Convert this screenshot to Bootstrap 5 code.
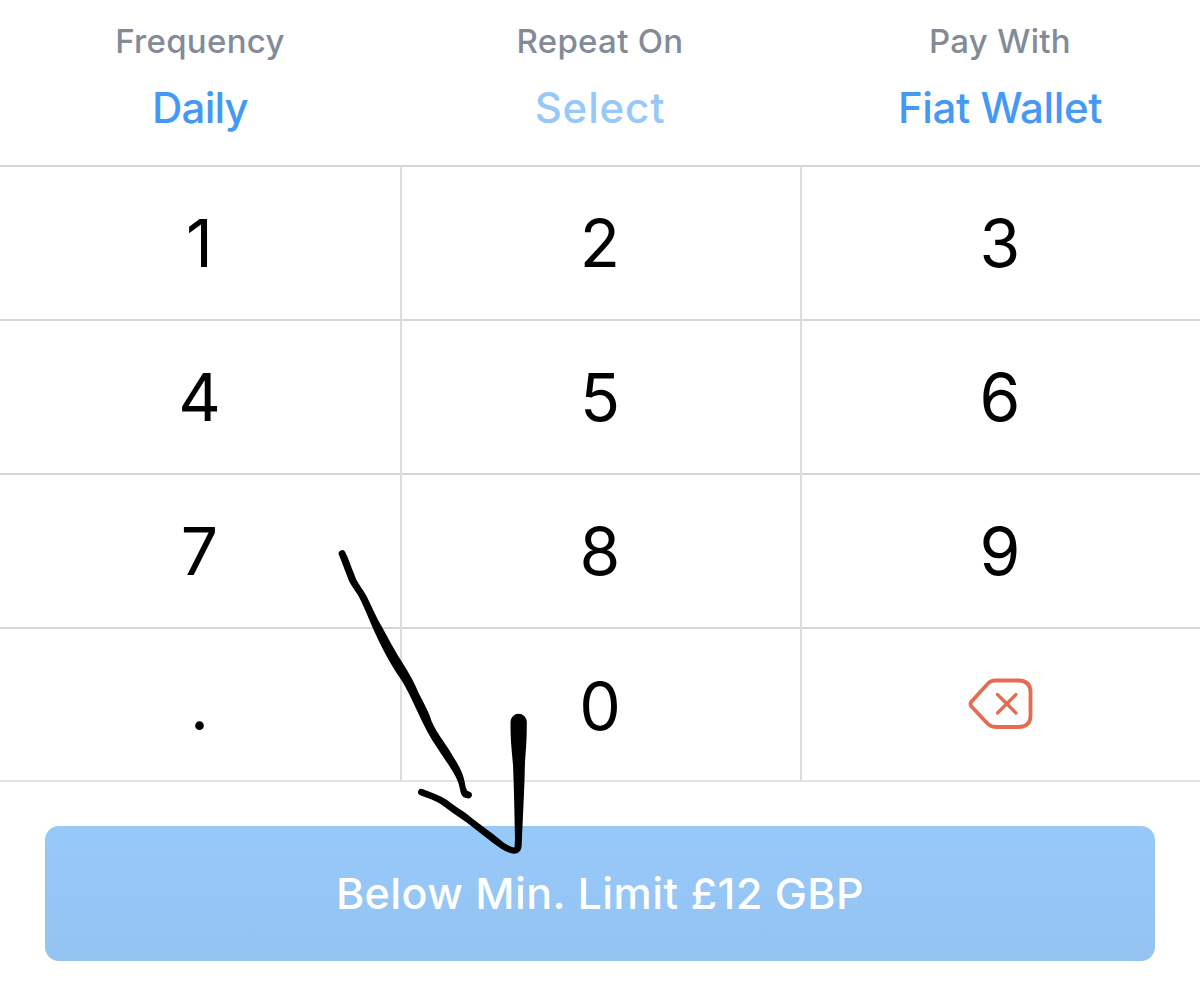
<!DOCTYPE html>
<html lang="en">
<head>
<meta charset="utf-8">
<meta name="viewport" content="width=device-width, initial-scale=1">
<title>Recurring buy</title>
<link href="https://cdn.jsdelivr.net/npm/bootstrap@5.3.0/dist/css/bootstrap.min.css" rel="stylesheet">
<style>
  body { font-family: Inter, "Liberation Sans", sans-serif; background: #fff; height: 990px; overflow: hidden; }
  .options { height: 164.500px; padding-top: 20px; }
  .opt-label { font-size: 33px; line-height: 42px; color: #838b99; letter-spacing: .3px; font-weight: 500; }
  .opt-value { font-size: 42px; line-height: 50px; margin-top: 21px; color: #4698f5; font-weight: 500; letter-spacing: -.4px; }
  .opt-value.short { letter-spacing: -.8px; }
  .opt-value.pending { color: #96c8f8; letter-spacing: .85px; }
  .keypad { border-bottom: 2px solid #e4e4e5; height: 617.500px; }
  .key { height: 154px; font-size: 66px; line-height: 1; color: #000; background: none; border: 0; border-top: 2px solid #d5d5d6; padding: 0 1px 0 0; }
  .key:last-child { height: 153.500px; padding-top: 3px; }
  .key-col + .key-col { border-left: 2px solid #dcdcdd; }
  .key-col + .key-col .key { padding-right: 2px; }
  .key-col:nth-child(-n+2) { flex: 0 0 400px; }
  .cta { margin: 44px 45px 0; height: 135px; border: 0; border-radius: 14px; color: #fff; font-size: 43px; font-weight: 500; letter-spacing: .45px; background: linear-gradient(#97c9f9, #94c3f1); padding: 0; }
  .scribble { left: 0; top: 0; pointer-events: none; }
</style>
</head>
<body>
<main class="position-relative">
  <header class="options row g-0 text-center">
    <div class="col"><div class="opt-label"><span>Frequency</span></div><div class="opt-value short"><span>Daily</span></div></div>
    <div class="col"><div class="opt-label"><span>Repeat On</span></div><div class="opt-value pending"><span>Select</span></div></div>
    <div class="col"><div class="opt-label"><span>Pay With</span></div><div class="opt-value"><span>Fiat Wallet</span></div></div>
  </header>
  <section class="keypad row g-0">
    <div class="col key-col d-flex flex-column">
      <button class="key">1</button><button class="key">4</button><button class="key">7</button><button class="key">.</button>
    </div>
    <div class="col key-col d-flex flex-column">
      <button class="key">2</button><button class="key">5</button><button class="key">8</button><button class="key">0</button>
    </div>
    <div class="col key-col d-flex flex-column">
      <button class="key">3</button><button class="key">6</button><button class="key">9</button>
      <button class="key d-flex align-items-center justify-content-center pt-0 pe-0" aria-label="Delete">
        <svg width="66" height="54" viewBox="968 677 66 54" fill="none" stroke="#e56c4f" stroke-width="3.8" stroke-linecap="round" stroke-linejoin="round">
          <path d="M995 680.5H1018Q1030.500 680.500 1030.500 692V715.500Q1030.500 727 1018 727H996Q991 727 988 724L971.500 706.500Q969.500 704 971.500 701.500L988 683.500Q991 680.500 995 680.500Z"/>
          <path stroke-width="3.200" d="M997.500 694.500L1016 713M1016 694.500L997.500 713"/>
        </svg>
      </button>
    </div>
  </section>
  <div class="d-grid"><button class="cta">Below Min. Limit £12 GBP</button></div>
  <svg class="scribble position-absolute" width="1200" height="990" viewBox="0 0 1200 990">
    <path d="M345.200 552C349 559 351 567 354.500 575C357 583 363 589 367 597C372 607 376 617 382 627C388 638 396 653 402 662C407 670 412 678 416 687C421 699 428 709 431.500 721C437 734 447 745 454 758C461 769 464 776 465.500 786.500L467 790.500L469.500 791.800A3.200 3.200 0 0 1 467.500 798.300C463 798 461 795 460.300 791C459 783 457 779 453 772C444 757 435 746 427.500 732C419 716 411 696 402 681C392 667 383 650 376.500 636C370 622 366 611 359 597C356 591 350 585 347.500 577C344.500 570 342 562 339 555A3.200 3.200 0 0 1 345.200 552Z"/>
    <path d="M422.300 789.100C430 792 439 795 447 800C457 808 464 811 473 819C482 826 491 832 498 838C504 843 509 847 514.500 847.500L515 838C514.500 815 514 790 513.300 773C513 755 510.500 749 510.500 722A8 8 0 0 1 526.800 722C526.800 749 525 755 524.700 773C524.300 790 523 815 521.700 845C521.500 851 518.500 853.700 514 853.700C507 853.500 500 848 493 843C484 836 475 829 466 822C457 816 449 810 442 805C435 800 427 798 420.200 795.200A3.200 3.200 0 0 1 422.300 789.100Z"/>
  </svg>
</main>
<script src="https://cdn.jsdelivr.net/npm/bootstrap@5.3.0/dist/js/bootstrap.bundle.min.js"></script>
</body>
</html>
